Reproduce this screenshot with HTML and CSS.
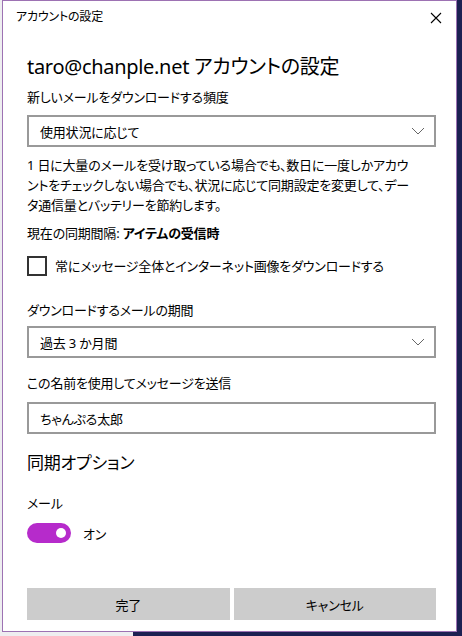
FILE: index.html
```html
<!DOCTYPE html>
<html lang="ja">
<head>
    <meta charset="UTF-8">
    <meta name="viewport" content="width=device-width, initial-scale=1.0">
    <title>アカウントの設定</title>
    <link rel="stylesheet" href="styles.css">
</head>
<body>
    <div class="dialog">
        <div class="titlebar">
            <span class="title">アカウントの設定</span>
            <svg class="close" width="12" height="12" viewBox="0 0 12 12">
                <path d="M1 1 L11 11 M11 1 L1 11" stroke="#000" stroke-width="1.1" fill="none"/>
            </svg>
        </div>

        <div class="content">
            <h1>taro@chanple.net アカウントの設定</h1>

            <div class="label label-first">新しいメールをダウンロードする頻度</div>
            <div class="select select-first">
                <span>使用状況に応じて</span>
                <svg class="chevron" width="14" height="8" viewBox="0 0 14 8">
                    <path d="M1 1 L7 7 L13 1" stroke="#666" stroke-width="1" fill="none"/>
                </svg>
            </div>

            <p class="desc">1 日に大量のメールを受け取っている場合でも、数日に一度しかアカウ<br>ントをチェックしない場合でも、状況に応じて同期設定を変更して、デー<br>タ通信量とバッテリーを節約します。</p>

            <div class="current">現在の同期間隔: <b>アイテムの受信時</b></div>

            <label class="check-row">
                <span class="checkbox"></span>
                <span>常にメッセージ全体とインターネット画像をダウンロードする</span>
            </label>

            <div class="label label-period">ダウンロードするメールの期間</div>
            <div class="select select-period">
                <span>過去 3 か月間</span>
                <svg class="chevron" width="14" height="8" viewBox="0 0 14 8">
                    <path d="M1 1 L7 7 L13 1" stroke="#666" stroke-width="1" fill="none"/>
                </svg>
            </div>

            <div class="label label-name">この名前を使用してメッセージを送信</div>
            <div class="textbox">ちゃんぷる太郎</div>

            <h2>同期オプション</h2>

            <div class="label label-mail">メール</div>
            <div class="toggle-row">
                <span class="toggle"><span class="knob"></span></span>
                <span>オン</span>
            </div>

            <div class="buttons">
                <button>完了</button>
                <button>キャンセル</button>
            </div>
        </div>
    </div>
</body>
</html>
```

FILE: styles.css
```css
body {
    margin: 0;
    height: 636px;
    overflow: hidden;
    background: linear-gradient(to right, #eeeef0 133px, #1c2052 133px);
    font-family: "Noto Sans", "Noto Sans CJK JP", sans-serif;
    font-feature-settings: "palt";
    color: #000;
}
.dialog {
    margin-left: 2px;
    width: 453px;
    height: 630px;
    border: 1px solid #9d72b3;
    background: #fff;
    display: flex;
    flex-direction: column;
}
.titlebar {
    height: 32px;
    display: flex;
    align-items: center;
    justify-content: space-between;
    padding: 0 14px 0 13px;
    flex-shrink: 0;
}
.title {
    font-size: 12px;
    line-height: 16px;
    letter-spacing: -0.2px;
}
.close {
    margin-top: 1px;
}
.content {
    flex: 1;
    display: flex;
    flex-direction: column;
    padding: 0 20px 11px 24px;
    font-size: 13px;
    letter-spacing: -0.2px;
}
h1 {
    margin: 20px 0 0;
    font-size: 20px;
    font-weight: normal;
    line-height: 28px;
    letter-spacing: -0.3px;
    white-space: nowrap;
}
.label {
    line-height: 20px;
}
.label-first { margin-top: 6px; }
.label-period { margin-top: 24px; }
.label-name { margin-top: 15px; }
.label-mail { margin-top: 17px; }
.select,
.textbox {
    height: 32px;
    box-sizing: border-box;
    border: 2px solid #999;
    display: flex;
    align-items: center;
    justify-content: space-between;
    padding: 0 9px 0 11px;
}
.select-first { margin-top: 8px; }
.select-period { margin-top: 6px; }
.textbox { margin-top: 9px; }
.desc {
    margin: 8px 0 0;
    line-height: 20px;
    white-space: nowrap;
}
.current {
    margin-top: 8px;
    line-height: 20px;
}
.check-row {
    margin-top: 13px;
    display: flex;
    align-items: center;
    gap: 8px;
    line-height: 20px;
}
.checkbox {
    width: 20px;
    height: 20px;
    box-sizing: border-box;
    border: 2px solid #333;
}
h2 {
    margin: 16px 0 0;
    font-size: 17px;
    font-weight: normal;
    line-height: 26px;
}
.toggle-row {
    margin-top: 10px;
    display: flex;
    align-items: center;
    gap: 12px;
}
.toggle {
    width: 44px;
    height: 20px;
    border-radius: 10px;
    background: #b62bcb;
    display: flex;
    align-items: center;
    justify-content: flex-end;
    padding-right: 5px;
    box-sizing: border-box;
}
.knob {
    width: 10px;
    height: 10px;
    border-radius: 50%;
    background: #fff;
}
.buttons {
    margin-top: auto;
    display: grid;
    grid-template-columns: 1fr 1fr;
    gap: 4px;
}
button {
    height: 32px;
    border: none;
    background: #cccccc;
    font-family: inherit;
    font-feature-settings: "palt";
    font-size: 13px;
    letter-spacing: -0.2px;
    color: #000;
}
```
